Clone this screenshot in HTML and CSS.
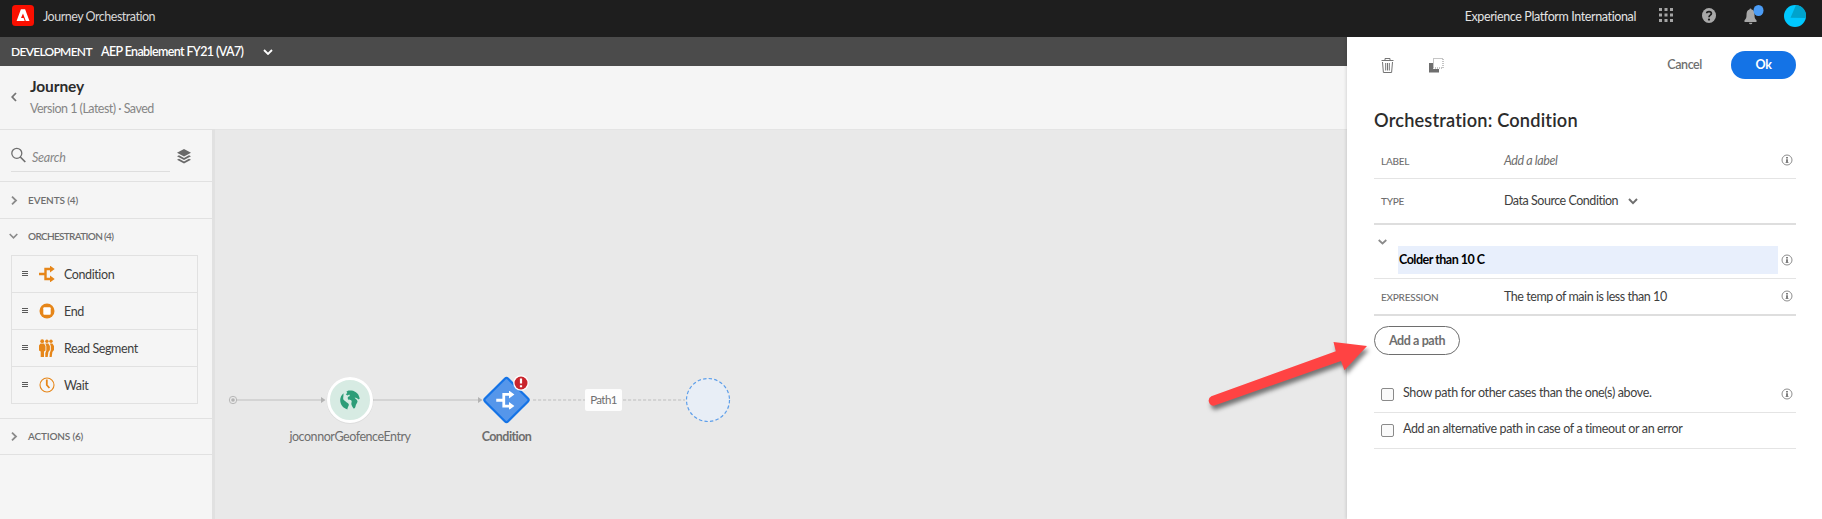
FILE: index.html
```
<!DOCTYPE html>
<html lang="en">
<head>
<meta charset="utf-8">
<title>Journey Orchestration</title>
<link rel="stylesheet" href="styles.css">
</head>
<body>
<svg class="defs" width="0" height="0">
  <symbol id="info" viewBox="0 0 12 12"><circle cx="6" cy="6" r="5" fill="none" stroke="#8e8e8e"/><path d="M5 3h2v1.400H5zM5 5.200H7v3h.6V9H4.500v-.8H5z" fill="#808080"/></symbol>
  <symbol id="grip" viewBox="0 0 6 6"><path d="M0 .5h6M0 2.500h6M0 4.500h6" stroke="#5a5a5a" fill="none"/></symbol>
  <symbol id="split" viewBox="0 0 16 16"><path d="M0 8h6M12 3H6.500v10H12" fill="none" stroke="currentColor" stroke-width="2.400"/><path d="M11 -.4l4.700 3.400L11 6.400zM11 9.600l4.700 3.400-4.700 3.400z" fill="currentColor"/></symbol>
</svg>
<header class="top">
  <svg class="logo" width="22" height="21" viewBox="0 0 22 21"><rect width="22" height="21" rx="3.500" fill="#fa0f00"/><path d="M8.900 4.200h4.200l4.400 11.800h-3.700L11 8.400l-2 4.600h2.600l1.100 3H4.600z" fill="#fff"/></svg>
  <span class="product">Journey Orchestration</span>
  <span class="org">Experience Platform International</span>
  <svg class="apps" width="14" height="14" viewBox="0 0 14 14" fill="#a5a5a5"><path d="M0 0h3v3H0zM5.500 0h3v3h-3zM11 0h3v3h-3zM0 5.500h3v3H0zM5.500 5.500h3v3h-3zM11 5.500h3v3h-3zM0 11h3v3H0zM5.500 11h3v3h-3zM11 11h3v3h-3z"/></svg>
  <svg class="help" width="14" height="15" viewBox="0 0 14 15"><ellipse cx="7" cy="7.500" rx="7" ry="7.400" fill="#a8a8a8"/><path d="M4.700 5.300C4.700 3 9.400 2.900 9.400 5.600 9.400 7.200 7 7.100 7 9.200" fill="none" stroke="#1e1e1e" stroke-width="1.700"/><circle cx="7" cy="11.600" r="1.100" fill="#1e1e1e"/></svg>
  <svg class="bell" width="20" height="20" viewBox="0 0 20 20"><path d="M5.500 4.600a1 1 0 0 1 2 0c2.700.7 3 3 3 5.500 0 3 .6 4 2 5.100V17H.5v-1.800c1.400-1.100 2-2.100 2-5.100 0-2.500.5-4.800 3-5.500zM5 17.800h3.400a1.700 1.500 0 0 1-3.400 0z" fill="#a8a8a8"/><ellipse cx="14.500" cy="5.500" rx="5" ry="5.500" fill="#4b9cf5"/></svg>
  <svg class="avatar" width="22" height="22" viewBox="0 0 22 22"><circle cx="11" cy="11" r="11" fill="#00c8ff"/><path d="M12 .1A11 11 0 0 1 21.900 13L6.500 12.800z" fill="#00a3cc"/></svg>
</header>
<div class="body">
  <main class="left">
    <div class="sandbox"><b class="dev">DEVELOPMENT</b><b class="aep">AEP Enablement FY21 (VA7)</b>
      <svg width="10" height="6" viewBox="0 0 10 6"><path d="M1 1l4 4 4-4" fill="none" stroke="#fff" stroke-width="1.800"/></svg></div>
    <div class="heading">
      <svg width="6" height="10" viewBox="0 0 6 10"><path d="M5 1L1.200 5 5 9" fill="none" stroke="#747474" stroke-width="1.800"/></svg>
      <div><h1>Journey</h1><p>Version 1 (Latest) · Saved</p></div>
    </div>
    <div class="work">
      <aside class="side">
        <div class="search">
          <div class="field"><svg width="15" height="16" viewBox="0 0 15 16"><circle cx="5.800" cy="6.300" r="5" fill="none" stroke="#6e6e6e" stroke-width="1.300"/><path d="M9.300 10l5 5" stroke="#6e6e6e" stroke-width="1.700"/></svg><i>Search</i></div>
          <svg class="layers" width="14" height="15" viewBox="0 0 14 15" fill="#6a6a6a"><path d="M7 0l7 3.700-7 3.700-7-3.700zM2 6.200l5 2.700 5-2.700 2 1-7 3.700-7-3.700zM2 9.800l5 2.700 5-2.700 2 1-7 3.700-7-3.700z"/></svg>
        </div>
        <div class="group events"><svg width="8" height="9" viewBox="0 0 8 9"><path d="M2 .7l4 3.800-4 3.800" fill="none" stroke="#8a8a8a" stroke-width="1.800"/></svg>EVENTS (4)</div>
        <div class="orch">
          <div class="group open"><svg width="9" height="6" viewBox="0 0 9 6"><path d="M.7 1l3.800 3.800L8.300 1" fill="none" stroke="#8a8a8a" stroke-width="1.600"/></svg>ORCHESTRATION (4)</div>
          <ul class="items">
            <li><svg class="grip" width="6" height="6"><use href="#grip"/></svg><svg class="ic" width="16" height="16"><use href="#split"/></svg><span>Condition</span></li>
            <li><svg class="grip" width="6" height="6"><use href="#grip"/></svg><svg class="ic" width="16" height="16" viewBox="0 0 16 16"><circle cx="8" cy="8" r="7.500" fill="#e68619"/><rect x="4.300" y="4.300" width="7.400" height="7.400" rx="1" fill="#fff"/></svg><span>End</span></li>
            <li><svg class="grip" width="6" height="6"><use href="#grip"/></svg><svg class="ic" width="16" height="18" viewBox="0 0 16 18" fill="#e68619"><circle cx="3.200" cy="2.200" r="1.900"/><circle cx="7.900" cy="2.200" r="1.700"/><circle cx="12" cy="2.200" r="1.700"/><path d="M1.500 4.600H5L6.500 7v4.500L5 12.500V18H1.700v-5.500L0 11.500V6.500zM6.300 4.600h3L10.900 7v4l-1.500 2-.7 5H6.300v-4l1-2.500V7zM10.900 4.600h2.500L15 7v4l-1.600 2-.7 5h-2.200l.3-4 1-3V7z"/></svg><span>Read Segment</span></li>
            <li><svg class="grip" width="6" height="6"><use href="#grip"/></svg><svg class="ic" width="16" height="16" viewBox="0 0 16 16"><circle cx="8" cy="8" r="7" fill="none" stroke="#e68619" stroke-width="1.100"/><path d="M7.800 2.500V8l2.600 3" fill="none" stroke="#e68619" stroke-width="1.800"/></svg><span>Wait</span></li>
          </ul>
        </div>
        <div class="group actions"><svg width="8" height="9" viewBox="0 0 8 9"><path d="M2 .7l4 3.800-4 3.800" fill="none" stroke="#8a8a8a" stroke-width="1.800"/></svg>ACTIONS (6)</div>
      </aside>
      <section class="canvas">
        <svg class="graph" width="560" height="110" viewBox="210 350 560 110">
          <path d="M237 400h87M373 400h107" stroke="#cdcdcd" stroke-width="1.500"/>
          <path d="M321 397l4.500 3-4.500 3zM478 397l4.500 3-4.500 3z" fill="#b3b3b3"/>
          <circle cx="233" cy="400" r="3.700" fill="none" stroke="#b8b8b8" stroke-width="1"/><circle cx="233" cy="400" r="1.800" fill="#b3b3b3"/>
          <path d="M533 400h152" stroke="#cbcbcb" stroke-width="1.500" stroke-dasharray="3.200 1.800"/>
          <circle cx="350" cy="400.500" r="23.500" fill="#000" opacity=".05"/>
          <circle cx="350" cy="400" r="21.500" fill="#d7ebe3" stroke="#fff" stroke-width="3"/>
          <path d="M343.500 393.200c-2 1.700-3.300 4.200-3.300 6.800 0 4.600 3 8.300 7.200 9.400-.2-1.900 1.400-3.200 1.500-4.700-.3-1.500-1.800-1.700-3-2.900-.9-1.300-2.500-1.400-2.700-2.800-.1-2.300.5-3.500.3-5.800zM348.500 390.400l-2 1 .8 1.500-1.500 1.300 1.500 1.200 2-.9.600 1.600c-1.800.4-2.600 1.400-2 2.900.7 1.300 2.600.4 3.500 1.500.9 1.300-.4 2.400 0 3.900.4 1.400 1.400 3.100 2.500 4.300 2.200-1.400 1.300-3.200 2.600-5 .7-1 1.500-2.200.7-3.200-.7-1.300-2.200-1.500-2.500-2.900l1.800.3 2.300 1.500.9-.8c-.4-4.300-3.800-7.700-8.200-8.200z" fill="#2d9d78"/>
          <rect x="490.300" y="383.800" width="32.400" height="32.400" rx="2" transform="rotate(45 506.500 400)" fill="#5596ea" stroke="#1473e6" stroke-width="2.200"/>
          <g color="#fff"><use href="#split" x="495.500" y="391" width="20" height="18.500"/></g>
          <circle cx="521" cy="383" r="7.800" fill="#fff"/><circle cx="521" cy="383" r="6.500" fill="#c9252d"/><path d="M521 378.500v5M521 385.300v2" stroke="#fff" stroke-width="2.200"/>
          <circle cx="708" cy="400" r="21.500" fill="#e8eef6" stroke="#5c9eea" stroke-width="1.200" stroke-dasharray="3.400 2.230"/>
        </svg>
        <span class="path">Path1</span>
        <span class="name geo">joconnorGeofenceEntry</span>
        <b class="name cond">Condition</b>
      </section>
    </div>
  </main>
  <aside class="panel">
    <div class="tools">
      <svg width="13" height="15" viewBox="0 0 13 15" fill="none" stroke="#747474"><path d="M.5 2.500h12M4 2V.5h5V2M1.500 4l.9 10.500h8.200L11.500 4M4.700 5v7.500M6.500 5v7.500M8.300 5v7.500"/></svg>
      <svg class="copy" width="15" height="15" viewBox="0 0 15 15"><path d="M0 5h4v6h6v3.500H0z" fill="#6e6e6e"/><rect x="4.500" y=".5" width="9.500" height="9.500" fill="none" stroke="#8a8a8a" stroke-dasharray="1 1"/></svg>
      <b class="cancel">Cancel</b><b class="ok">Ok</b>
    </div>
    <h2>Orchestration: Condition</h2>
    <div class="row label"><span class="key">LABEL</span><i>Add a label</i><svg class="inf" width="12" height="12"><use href="#info"/></svg></div>
    <div class="row type"><span class="key">TYPE</span><span class="val">Data Source Condition</span><svg class="dd" width="10" height="7" viewBox="0 0 10 7"><path d="M1 1l4 4.200L9 1" fill="none" stroke="#6e6e6e" stroke-width="1.900"/></svg></div>
    <div class="row cpath"><svg class="tw" width="9" height="6" viewBox="0 0 9 6"><path d="M.7 1l3.800 3.500L8.300 1" fill="none" stroke="#8a8a8a" stroke-width="1.700"/></svg><b class="input">Colder than 10 C</b><svg class="inf" width="12" height="12"><use href="#info"/></svg></div>
    <div class="row expr"><span class="key">EXPRESSION</span><span class="val">The temp of main is less than 10</span><svg class="inf" width="12" height="12"><use href="#info"/></svg></div>
    <b class="add">Add a path</b>
    <div class="row check first"><span class="box"></span><span class="ct">Show path for other cases than the one(s) above.</span><svg class="inf" width="12" height="12"><use href="#info"/></svg></div>
    <div class="row check"><span class="box"></span><span class="ct">Add an alternative path in case of a timeout or an error</span></div>
  </aside>
</div>
<svg class="arrow" width="180" height="90" viewBox="1200 330 180 90"><path d="M1211.300 396.300L1335.800 351.300 1333.500 342 1367 346 1344.500 370.300 1341 361 1214.500 405.600A5 5 0 0 1 1211.300 396.300z" fill="#ff4343"/></svg>
</body>
</html>
```

FILE: styles.css
```
* { box-sizing: border-box; margin: 0; padding: 0; }
body { width: 1822px; height: 519px; overflow: hidden; background: #fff; color: #3e3e3e; font: 400 12.5px/18px Lato, "Open Sans", sans-serif; letter-spacing: -.4px; white-space: nowrap; }
svg { display: block; flex: none; }
.defs { position: absolute; }
b { font-weight: 700; }
i { color: #6e6e6e; }

.top { display: flex; align-items: flex-start; height: 37px; background: #1e1e1e; padding: 5px 16px 0 12px; color: #d8d8d8; }
.product { margin: 3px 0 0 9px; letter-spacing: -.48px; }
.org { margin: 3px 0 0 auto; color: #e4e4e4; letter-spacing: -.38px; }
.apps { margin: 3px -1px 0 23px; }
.help { margin: 3px 0 0 30px; }
.bell { margin-left: 28px; }
.avatar { margin-left: 20px; }

.body { display: flex; height: 482px; }
.left { width: 1347px; display: flex; flex-direction: column; }
.sandbox { display: flex; align-items: center; height: 29px; background: #4b4b4b; color: #fff; padding: 1px 0 0 12px; }
.dev { width: 90px; font-size: 12px; font-weight: 600; letter-spacing: -.7px; margin-left: -1px; }
.aep { width: 162px; font-weight: 600; letter-spacing: -.63px; }
.sandbox svg { margin-bottom: 1px; }
.heading { display: flex; height: 63px; padding-left: 11px; background: #f5f5f5; gap: 13px; }
.heading > svg { margin-top: 26px; }
h1 { font-size: 15.500px; line-height: 20px; font-weight: 700; letter-spacing: -.1px; color: #2c2c2c; margin-top: 10px; }
.heading p { color: #868686; margin-top: 4px; letter-spacing: -.52px; }

.work { display: flex; flex: 1; }
.side { width: 215px; background: #f5f5f5; border-top: 1px solid #e1e1e1; border-right: 3px solid #e1e1e1; }
.search { height: 52px; border-bottom: 1px solid #e1e1e1; display: flex; padding-left: 11px; }
.field { display: flex; width: 159px; height: 42px; border-bottom: 1px solid #dedede; gap: 6px; padding-top: 17px; }
.field i { margin-top: 2px; color: #868686; letter-spacing: -.25px; }
.layers { margin: 19px 0 0 7px; }
.group { display: flex; align-items: center; gap: 10px; font-size: 10px; font-weight: 600; letter-spacing: -.18px; color: #6e6e6e; padding-left: 10px; border-bottom: 1px solid #e1e1e1; height: 37px; }
.events { letter-spacing: -.1px; }
.open { border: 0; padding: 0 0 2px 9px; height: 36px; letter-spacing: -.65px; }
.orch { height: 200px; border-bottom: 1px solid #e1e1e1; }
.orch .open { letter-spacing: -.67px; }
.items { list-style: none; width: 187px; margin-left: 11px; border: 1px solid #e1e1e1; }
.items li { display: flex; align-items: center; height: 37px; border-bottom: 1px solid #e1e1e1; padding-left: 10px; }
.items li:last-child { height: 36px; border: 0; }
.items li span { padding-top: 2px; }
.items .grip { margin-right: 11px; }
.ic { margin-right: 9px; color: #e68619; }
.actions { height: 36px; padding-bottom: 1px; }

.canvas { position: relative; flex: 1; background: #e9e9e9; border-top: 1px solid #e4e4e4; }
.graph { position: absolute; left: -5px; top: 220px; }
.path { position: absolute; left: 370px; top: 259px; width: 37px; height: 22px; line-height: 21px; font-size: 11.500px; letter-spacing: -.6px; text-align: center; background: #fdfdfd; border-radius: 2px; color: #6e6e6e; }
.name { position: absolute; top: 298px; transform: translateX(-50%); color: #6e6e6e; }
.geo { left: 135px; letter-spacing: -.45px; }
.cond { left: 291.500px; letter-spacing: -.55px; }

.panel { position: relative; width: 475px; background: #fff; padding: 14px 26px 0 27px; box-shadow: -1px 0 3px rgba(0,0,0,.12); clip-path: inset(0 0 0 -5px); }
.tools { display: flex; height: 28px; padding-left: 7px; }
.tools > svg { margin-top: 7px; }
.tools .copy { margin-left: 35px; }
.cancel { font-weight: 600; margin: 5px 29px 0 auto; color: #6e6e6e; }
.ok { width: 65px; height: 28px; line-height: 28px; border-radius: 14px; background: #1473e6; color: #fff; text-align: center; }
h2 { font-size: 18.200px; line-height: 24px; font-weight: 600; letter-spacing: .18px; color: #2c2c2c; margin-top: 29px; }
.row { display: flex; align-items: center; padding: 0 3px 0 7px; border-bottom: 1px solid #e4e4e4; }
.key { width: 123px; font-size: 10px; color: #6e6e6e; font-weight: 500; letter-spacing: -.25px; padding-top: 1px; }
.inf { margin-left: auto; }
.label { height: 47px; padding-top: 10px; }
.label i { padding-top: 2px; }
.type { height: 46px; padding-bottom: 1px; border-bottom: 2px solid #dedede; }
.type .val { letter-spacing: -.47px; }
.dd { margin: 1px 0 0 10px; }
.cpath { height: 54px; padding: 21px 3px 4px 4px; }
.tw { align-self: flex-start; margin: -7px 11px 0 0; }
.input { width: 380px; height: 28px; line-height: 27px; padding-left: 1px; background: #e8effc; color: #000; letter-spacing: -.5px; }
.expr { height: 37px; padding-bottom: 1px; border-bottom: 2px solid #dedede; }
.expr .val { padding-top: 2px; letter-spacing: -.45px; }
.add { display: block; width: 86px; height: 29px; margin: 10px 0 22px; border: 1px solid #6e6e6e; border-radius: 15px; text-align: center; line-height: 27px; color: #6e6e6e; }
.check { height: 36px; align-items: flex-start; padding-top: 11px; }
.box { width: 13px; height: 13px; border: 1px solid #8a8a8a; border-radius: 2px; background: #fafafa; }
.ct { margin: -4px 0 0 9px; letter-spacing: -.36px; }
.arrow { position: absolute; left: 1200px; top: 330px; filter: drop-shadow(2px 4px 2px rgba(0,0,0,.5)); }
```
